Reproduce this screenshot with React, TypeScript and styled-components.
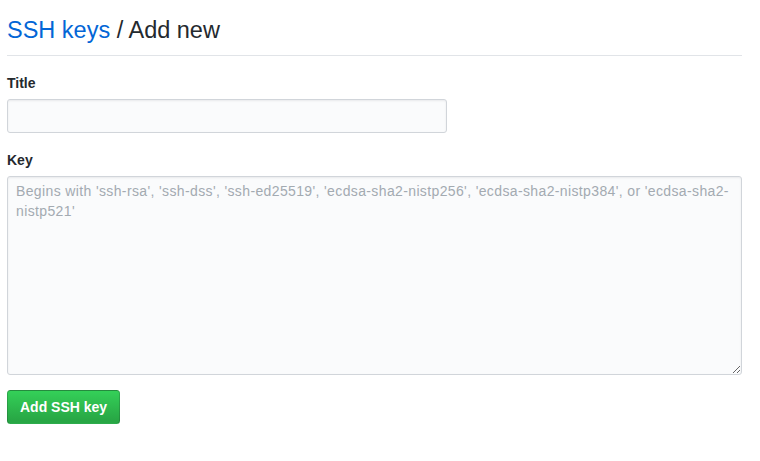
import React from "react";
import styled, { createGlobalStyle } from "styled-components";

const GlobalStyle = createGlobalStyle`
  html, body { margin: 0; padding: 0; background: #ffffff; }
  body {
    font-family: "Liberation Sans", Arial, Helvetica, sans-serif;
    color: #24292e;
    font-size: 14px;
    line-height: 20px;
  }
  * { box-sizing: border-box; }
`;

const Page = styled.div`
  padding: 15px 18px 0 7px;
  display: flex;
  flex-direction: column;
`;

const Subhead = styled.div`
  padding-bottom: 10px;
  border-bottom: 1px solid #e1e4e8;
  margin-bottom: 17px;
`;

const Heading = styled.h2`
  margin: 0;
  font-size: 23.5px;
  line-height: 30px;
  font-weight: 400;
  color: #24292e;
`;

const Crumb = styled.a`
  color: #0366d6;
  text-decoration: none;
`;

const Form = styled.form`
  display: flex;
  flex-direction: column;
`;

const Group = styled.div<{ $gap?: number }>`
  display: flex;
  flex-direction: column;
  margin-bottom: ${(p) => p.$gap ?? 17}px;
`;

const Label = styled.label`
  font-weight: 700;
  font-size: 14px;
  line-height: 20px;
  margin-bottom: 6px;
  color: #24292e;
`;

const fieldBase = `
  font-family: "Liberation Sans", Arial, Helvetica, sans-serif;
  font-size: 14px;
  line-height: 20px;
  color: #24292e;
  background-color: #fafbfc;
  border: 1px solid #d1d5da;
  border-radius: 3px;
  box-shadow: inset 0 1px 2px rgba(27, 31, 35, 0.075);
  outline: none;
  &::placeholder { color: #a3aab1; opacity: 1; }
`;

const TextInput = styled.input`
  ${fieldBase}
  width: 440px;
  height: 34px;
  padding: 6px 8px;
`;

const KeyArea = styled.textarea`
  ${fieldBase}
  width: 100%;
  height: 199px;
  padding: 4px 8px;
  resize: vertical;
  display: block;
  letter-spacing: 0.37px;
`;

const PrimaryButton = styled.button`
  align-self: flex-start;
  font-family: "Liberation Sans", Arial, Helvetica, sans-serif;
  font-size: 14px;
  font-weight: 700;
  line-height: 20px;
  height: 34px;
  padding: 6px 12px;
  color: #ffffff;
  background-color: #28a745;
  background-image: linear-gradient(-180deg, #34d058 0%, #28a745 90%);
  border: 1px solid rgba(27, 31, 35, 0.2);
  border-radius: 3.5px;
  cursor: pointer;
`;

export default function App() {
  return (
    <>
      <GlobalStyle />
      <Page>
        <Subhead>
          <Heading>
            <Crumb href="#">SSH keys</Crumb> / Add new
          </Heading>
        </Subhead>
        <Form onSubmit={(e) => e.preventDefault()}>
          <Group>
            <Label htmlFor="ssh-title">Title</Label>
            <TextInput id="ssh-title" type="text" />
          </Group>
          <Group $gap={15}>
            <Label htmlFor="ssh-key">Key</Label>
            <KeyArea
              id="ssh-key"
              placeholder="Begins with 'ssh-rsa', 'ssh-dss', 'ssh-ed25519', 'ecdsa-sha2-nistp256', 'ecdsa-sha2-nistp384', or 'ecdsa-sha2-nistp521'"
            />
          </Group>
          <PrimaryButton type="submit">Add SSH key</PrimaryButton>
        </Form>
      </Page>
    </>
  );
}
